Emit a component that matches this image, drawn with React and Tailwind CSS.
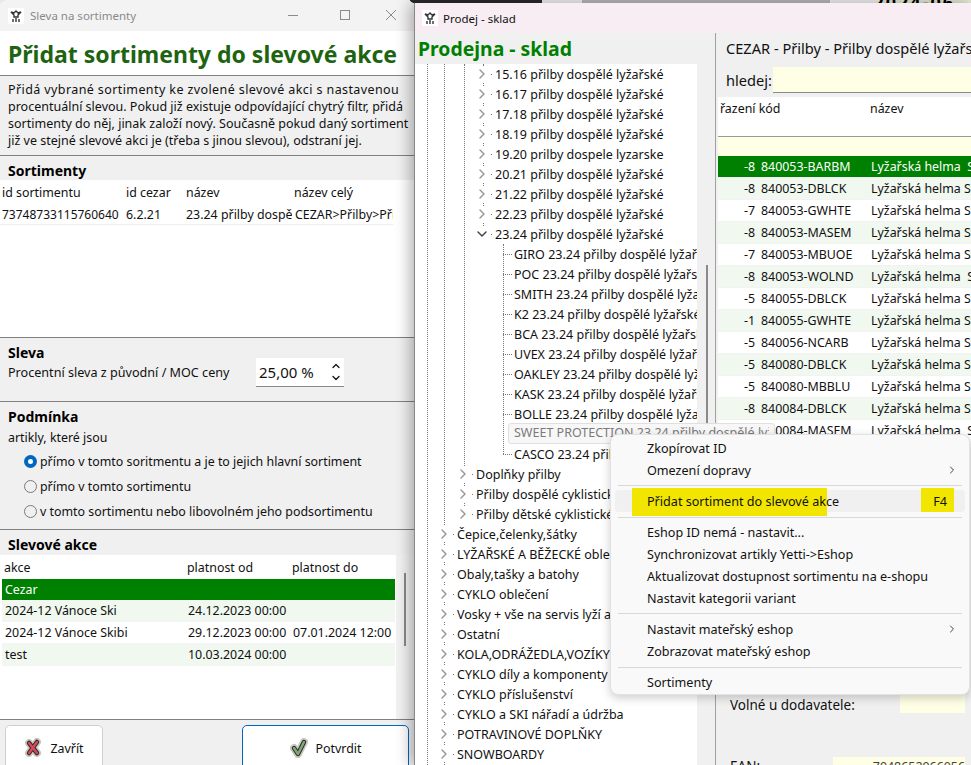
import { ChevronDown, ChevronRight, ChevronUp } from "lucide-react";

const treeTop = [
	"15.16 přilby dospělé lyžařské",
	"16.17 přilby dospělé lyžařské",
	"17.18 přilby dospělé lyžařské",
	"18.19 přilby dospělé lyžařské",
	"19.20 prilby dospele lyzarske",
	"20.21 přilby dospělé lyžařské",
	"21.22 přilby dospělé lyžařské",
	"22.23 přilby dospělé lyžařské",
];

const brands = [
	"GIRO 23.24 přilby dospělé lyžařské",
	"POC 23.24 přilby dospělé lyžařské",
	"SMITH 23.24 přilby dospělé lyžařské",
	"K2 23.24 přilby dospělé lyžařské",
	"BCA 23.24 přilby dospělé lyžařské",
	"UVEX 23.24 přilby dospělé lyžařské",
	"OAKLEY 23.24 přilby dospělé lyžařské",
	"KASK 23.24 přilby dospělé lyžařské",
	"BOLLE 23.24 přilby dospělé lyžařské",
];

const roots = [
	"Čepice,čelenky,šátky",
	"LYŽAŘSKÉ A BĚŽECKÉ oblečení",
	"Obaly,tašky a batohy",
	"CYKLO oblečení",
	"Vosky + vše na servis lyží a snowboardů",
	"Ostatní",
	"KOLA,ODRÁŽEDLA,VOZÍKY",
	"CYKLO díly a komponenty",
	"CYKLO příslušenství",
	"CYKLO a SKI nářadí a údržba",
	"POTRAVINOVÉ DOPLŇKY",
	"SNOWBOARDY",
];

const products = [
	["-8", "840053-BARBM", "Lyžařská helma  Sweet"],
	["-8", "840053-DBLCK", "Lyžařská helma Sweet"],
	["-7", "840053-GWHTE", "Lyžařská helma Sweet"],
	["-8", "840053-MASEM", "Lyžařská helma Sweet"],
	["-7", "840053-MBUOE", "Lyžařská helma Sweet"],
	["-8", "840053-WOLND", "Lyžařská helma  Sweet"],
	["-5", "840055-DBLCK", "Lyžařská helma Sweet"],
	["-1", "840055-GWHTE", "Lyžařská helma Sweet"],
	["-5", "840056-NCARB", "Lyžařská helma Sweet"],
	["-5", "840080-DBLCK", "Lyžařská helma Sweet"],
	["-5", "840080-MBBLU", "Lyžařská helma Sweet"],
	["-8", "840084-DBLCK", "Lyžařská helma Sweet"],
	["-8", "840084-MASEM", "Lyžařská helma  Sweet"],
];

const promos = [
	["2024-12 Vánoce Ski", "24.12.2023 00:00", "", "bg-[#f0f8f0]"],
	["2024-12 Vánoce Skibi", "29.12.2023 00:00", "07.01.2024 12:00", "bg-white"],
	["test", "10.03.2024 00:00", "", "bg-[#f0f8f0]"],
];

const AppIcon = () => (
	<span className="flex h-4 w-4 shrink-0 items-center justify-center bg-white">
		<svg viewBox="0 0 16 16" className="h-4 w-4">
			<path d="M3 4l3 1 2-2 2 2 3-1-3 3v2H6V7zM5 11v3M8 10v4M11 11v3" fill="none" stroke="#333" strokeWidth="1.4" />
		</svg>
	</span>
);

const WindowControls = () => (
	<svg viewBox="0 0 108 10" className="mb-[2px] mr-[18px] h-[10px] w-[108px]" fill="none" stroke="#8a8a8a" strokeWidth="1">
		<path d="M0 5.5h10" />
		<rect x="52.5" y="0.5" width="9" height="9" />
		<path d="M98 0l10 10M108 0L98 10" />
	</svg>
);

const ButtonMark = ({ path, color }) => (
	<svg viewBox="0 0 18 20" className="h-5 w-[18px]" fill="none" strokeLinecap="round" strokeLinejoin="round">
		<path d={path} stroke="#cbc8c0" strokeWidth="8" />
		<path d={path} stroke="#2b2b2b" strokeWidth="4.5" />
		<path d={path} stroke={color} strokeWidth="2.5" />
	</svg>
);

const SectionTitle = ({ children }) => (
	<div className="text-[14px] font-bold leading-[19px] text-black">{children}</div>
);

const Radio = ({ checked, label }) => (
	<div className="flex h-[25px] items-center gap-[3px] pl-6">
		{checked ? (
			<span className="flex h-[13px] w-[13px] items-center justify-center rounded-full bg-[#0067c0]">
				<span className="h-[5px] w-[5px] rounded-full bg-white" />
			</span>
		) : (
			<span className="h-[13px] w-[13px] rounded-full border border-[#7a7a7a]" />
		)}
		<span>{label}</span>
	</div>
);

const TreeRow = ({ indent, open, children }) => (
	<div className={`relative flex h-5 items-center whitespace-nowrap ${indent}`}>
		{open ? (
			<ChevronDown className="h-4 w-4 shrink-0 bg-white text-[#444]" strokeWidth={2.2} />
		) : (
			<ChevronRight className="h-4 w-4 shrink-0 bg-white text-[#999]" strokeWidth={2.2} />
		)}
		<span className="ml-px mr-[3px] h-px w-px shrink-0 bg-[#777]" />
		<span>{children}</span>
	</div>
);

const BrandRow = ({ children }) => (
	<div className="flex h-5 items-center whitespace-nowrap">
		<span className="mr-[2px] w-[9px] shrink-0 border-t border-dotted border-[#777]" />
		{children}
	</div>
);

const MenuItem = ({ label, arrow }) => (
	<div className="flex h-[22px] items-center justify-between pl-9 pr-[11px]">
		<span>{label}</span>
		{arrow && <ChevronRight className="h-3 w-3 text-[#444]" />}
	</div>
);

const Separator = ({ spacing = "my-[4px]" }) => (
	<div className={`ml-[7px] mr-[7px] h-px bg-[#d8d8d8] ${spacing}`} />
);

const DiscountWindow = () => (
	<section className="absolute left-0 top-0 flex h-[765px] w-[414px] flex-col overflow-hidden rounded-t-lg bg-[#f0f0f0] text-[12.4px] leading-[17px] text-[#111]">
		<header className="flex h-[31px] shrink-0 items-center bg-[#f3f3f3] pl-2 text-[11.5px] text-[#8a8a8a]">
			<AppIcon />
			<span className="ml-[6px] flex-1">Sleva na sortimenty</span>
			<WindowControls />
		</header>
		<div className="h-[45px] shrink-0 border-b border-[#808080] bg-white pl-2 text-[23px] font-bold leading-[46px] text-[#1e6410]">
			Přidat sortimenty do slevové akce
		</div>
		<p className="h-[80px] shrink-0 whitespace-nowrap border-b border-[#808080] pl-2 pt-[5px] text-[12.5px]">
			<span className="tracking-[0.4px]">Přidá vybrané sortimenty ke zvolené slevové akci s nastavenou</span>
			<br />
			procentuální slevou. Pokud již existuje odpovídající chytrý filtr, přidá
			<br />
			sortimenty do něj, jinak založí nový. Současně pokud daný sortiment
			<br />
			již ve stejné slevové akci je (třeba s jinou slevou), odstraní jej.
		</p>
		<div className="h-[24px] shrink-0 pl-2 pt-[5px]">
			<SectionTitle>Sortimenty</SectionTitle>
		</div>
		<div className="h-[158px] shrink-0 border-b border-[#808080] bg-white">
			<div className="flex h-[24px] items-center">
				<span className="w-[126px] pl-[2px]">id sortimentu</span>
				<span className="w-[60px]">id cezar</span>
				<span className="w-[108px]">název</span>
				<span>název celý</span>
			</div>
			<div className="flex h-[21px] w-[393px] items-center border-b border-[#eeeeee] pt-[1px]">
				<span className="w-[126px] pl-[2px] text-[12px]">73748733115760640</span>
				<span className="w-[60px]">6.2.21</span>
				<span className="mr-[3px] w-[106px] overflow-hidden whitespace-nowrap">23.24 přilby dospělé lyžařské</span>
				<span className="w-[98px] overflow-hidden whitespace-nowrap">CEZAR&gt;Přilby&gt;Přilby dospělé</span>
			</div>
		</div>
		<div className="h-[64px] shrink-0 border-b border-[#808080] pl-2 pt-[5px]">
			<SectionTitle>Sleva</SectionTitle>
			<div className="-mt-[4px] flex items-center">
				<span className="w-[248px] text-[12.6px]">Procentní sleva z původní / MOC ceny</span>
				<div className="flex h-[29px] w-[88px] items-center justify-between border-b border-[#8a8a8a] bg-white pl-[3px] pr-[2px] text-[15px]">
					<span>25,00 %</span>
					<span className="flex flex-col">
						<ChevronUp className="h-3 w-3" strokeWidth={2.5} />
						<ChevronDown className="h-3 w-3" strokeWidth={2.5} />
					</span>
				</div>
			</div>
		</div>
		<div className="h-[128px] shrink-0 border-b border-[#808080] pt-[5px]">
			<div className="pl-2">
				<SectionTitle>Podmínka</SectionTitle>
				<div className="mt-[3px] h-[20px]">artikly, které jsou</div>
			</div>
			<Radio checked label="přímo v tomto soritmentu a je to jejich hlavní sortiment" />
			<Radio label="přímo v tomto sortimentu" />
			<Radio label="v tomto sortimentu nebo libovolném jeho podsortimentu" />
		</div>
		<div className="h-[25px] shrink-0 pl-2 pt-[5px]">
			<SectionTitle>Slevové akce</SectionTitle>
		</div>
		<div className="relative h-[165px] shrink-0 border-b border-[#808080] bg-white pl-[2px]">
			<div className="flex h-[24px] items-center pl-[2px]">
				<span className="w-[183px]">akce</span>
				<span className="w-[105px]">platnost od</span>
				<span>platnost do</span>
			</div>
			<div className="flex h-[21px] w-[393px] items-center bg-[#008000] pl-[3px] text-white">Cezar</div>
			{promos.map(([name, from, to, rowColor]) => (
				<div key={name} className={`flex h-[22px] w-[393px] items-center border-b border-[#f4f4f4] pl-[3px] ${rowColor}`}>
					<span className="w-[183px]">{name}</span>
					<span className="w-[105px]">{from}</span>
					<span>{to}</span>
				</div>
			))}
			<div className="absolute right-0 top-0 h-full w-[18px] bg-[#f2f2f2]">
				<div className="absolute left-[8px] top-[18px] h-[73px] w-[2px] bg-[#8a8a8a]" />
			</div>
		</div>
		<div className="flex flex-1 justify-between px-[5px] pt-[5px]">
			<button type="button" className="flex h-[46px] w-[98px] items-center justify-center gap-2 rounded-[5px] border border-[#d0d0d0] bg-white">
				<ButtonMark path="M5 5l8 10M13 4L5 15" color="#d8485a" />
				Zavřít
			</button>
			<button type="button" className="flex h-[46px] w-[167px] items-center justify-center gap-2 rounded-[5px] border border-[#0067c0] bg-white">
				<ButtonMark path="M4 10l4 6 6-12" color="#7fa878" />
				Potvrdit
			</button>
		</div>
	</section>
);

const Tree = () => (
	<div className="relative h-[701px] w-[282px] overflow-hidden bg-white text-[12.5px]">
		<div className="absolute bottom-0 left-[12px] top-0 border-l border-dotted border-[#777]" />
		<div className="absolute bottom-0 left-[29px] top-0 border-l border-dotted border-[#777]" />
		<div className="absolute left-[49px] top-0 h-[450px] border-l border-dotted border-[#777]" />
		<div className="absolute left-[68px] top-0 h-[170px] border-l border-dotted border-[#777]" />
		{treeTop.map((label) => (
			<TreeRow key={label} indent="pl-[59px]">{label}</TreeRow>
		))}
		<TreeRow indent="pl-[59px]" open>23.24 přilby dospělé lyžařské</TreeRow>
		<div className="relative ml-[88px]">
			<div className="absolute left-0 top-0 h-[210px] border-l border-dotted border-[#777]" />
			{brands.map((label) => (
				<BrandRow key={label}>{label}</BrandRow>
			))}
			<div className="h-5" />
			<BrandRow>CASCO 23.24 přilby dospělé lyžařské</BrandRow>
		</div>
		<TreeRow indent="pl-[40px]">Doplňky přilby</TreeRow>
		<TreeRow indent="pl-[40px]">Přilby dospělé cyklistické</TreeRow>
		<TreeRow indent="pl-[40px]">Přilby dětské cyklistické</TreeRow>
		{roots.map((label) => (
			<TreeRow key={label} indent="pl-[21px]">{label}</TreeRow>
		))}
	</div>
);

const ProductsPane = () => (
	<div className="min-w-0 flex-1 overflow-hidden border-l border-[#a0a0a0] pl-[2px]">
		<div className="flex h-[33px] items-center whitespace-nowrap pb-[2px] pl-2 text-[14.6px]">
			CEZAR - Přilby - Přilby dospělé lyžařské - 23.24
		</div>
		<div className="flex h-[31px] items-start pt-[1px]">
			<span className="w-[55px] pl-2 text-[14.6px] leading-[26px]">hledej:</span>
			<div className="h-[26px] flex-1 border-b border-[#8a8a8a] bg-[#ffffe6]" />
		</div>
		<div className="flex h-[40px] border-b border-[#9a9a9a] bg-white pl-[2px] pt-[3px]">
			<span className="w-[150px]">řazení kód</span>
			<span>název</span>
		</div>
		<div className="h-[19px] bg-[#ffffe6]" />
		{products.map(([stock, code, name], index) => (
			<div
				key={code}
				className={`flex h-[22px] items-center overflow-hidden whitespace-pre border-b border-[#f2f2f2] ${
					index === 0 ? "bg-[#008000] text-white" : index % 2 === 1 ? "bg-[#f0f8f0]" : "bg-white"
				}`}
			>
				<span className="w-[37px] shrink-0 text-right">{stock}</span>
				<span className="ml-[6px] w-[110px] shrink-0">{code}</span>
				<span>{name}</span>
			</div>
		))}
		<div className="ml-[2px] h-[323px] bg-[#f0f0f0] pl-[10px] pr-[6px] pt-[248px]">
			<div className="flex h-[23px] items-end">
				<span className="w-[170px] text-[13.5px] leading-[16px]">Volné u dodavatele:</span>
				<span className="h-[23px] w-[65px] bg-[#ffffe6]" />
			</div>
			<div className="mt-[44px] flex h-[22px]">
				<span className="w-[103px] pt-[1px] text-[13.5px]">EAN:</span>
				<span className="h-[22px] w-[132px] bg-[#ffffe6] pt-[1px] text-right text-[#444]">7948652966056</span>
			</div>
		</div>
	</div>
);

const ContextMenu = () => (
	<div className="absolute left-[610px] top-[434px] h-[261px] w-[360px] rounded-lg border border-[#e2e2e2] bg-[#f9f9f9] pt-[2px] text-[12.6px] leading-[17px] text-[#111] shadow-[0_3px_10px_rgba(0,0,0,0.2)]">
		<MenuItem label="Zkopírovat ID" />
		<MenuItem label="Omezení dopravy" arrow />
		<Separator />
		<div className="relative mx-[4px] flex h-[22px] items-center justify-between rounded bg-[#f0f0f0] pl-8 pr-[18px]">
			<span className="absolute left-[17px] top-[-2px] h-[28px] w-[195px] bg-[#f2e600]" />
			<span className="absolute right-[11px] top-[-2px] h-[24px] w-[33px] bg-[#f2e600]" />
			<span className="relative">Přidat sortiment do slevové akce</span>
			<span className="relative">F4</span>
		</div>
		<Separator spacing="mt-[5px] mb-[3px]" />
		<MenuItem label="Eshop ID nemá - nastavit..." />
		<MenuItem label="Synchronizovat artikly Yetti->Eshop" />
		<MenuItem label="Aktualizovat dostupnost sortimentu na e-shopu" />
		<MenuItem label="Nastavit kategorii variant" />
		<Separator />
		<MenuItem label="Nastavit mateřský eshop" arrow />
		<MenuItem label="Zobrazovat mateřský eshop" />
		<Separator spacing="mt-[5px] mb-[3px]" />
		<MenuItem label="Sortimenty" />
	</div>
);

// hovered tree item spills over the product table, so it sits above both panes
const HoveredTreeItem = () => (
	<div className="absolute left-[508px] top-[423px] flex h-[21px] w-[267px] items-center rounded-[3px] border border-[#e0e0e0] bg-[#f7f7f7] pl-[5px] pr-[5px] text-[12.5px] text-[#7a7a7a]">
		<span className="overflow-hidden whitespace-nowrap">SWEET PROTECTION 23.24 přilby dospělé lyžařské</span>
	</div>
);

const StockWindow = () => (
	<section className="absolute left-[414px] top-[3px] flex h-[762px] w-[557px] flex-col overflow-hidden border-l border-[#888] bg-[#f0f0f0] text-[12.4px] leading-[17px] text-[#111] shadow-[-4px_0_14px_rgba(0,0,0,0.3)]">
		<header className="flex h-[30px] shrink-0 items-center bg-[#f8edf3] pl-[7px] text-[11.5px]">
			<AppIcon />
			<span className="ml-[5px]">Prodej - sklad</span>
		</header>
		<div className="flex flex-1">
			<div className="relative w-[300px] shrink-0">
				<div className="flex h-[31px] items-center pl-[3px] text-[19.4px] font-bold text-[#008000]">Prodejna - sklad</div>
				<Tree />
				<div className="absolute left-[291px] top-[232px] h-[190px] w-[2px] bg-[#8a8a8a]" />
			</div>
			<ProductsPane />
		</div>
	</section>
);

const DesktopStrip = () => (
	<div className="relative flex h-[3px] items-stretch overflow-hidden">
		<div className="w-[410px] bg-[#e8e8e8]" />
		<div className="w-[132px] bg-[#2a2a2a]" />
		<div className="w-[40px] bg-[#f0f0f0]" />
		<div className="w-[248px] bg-[#b8b8b8]" />
		<div className="w-[52px] bg-[#f0f0f0]" />
		<div className="flex-1 bg-[#dfe8d0]" />
	</div>
);

export default function App() {
	return (
		<main className="relative h-[765px] w-[971px] overflow-hidden bg-[#f0f0f0] font-['Noto_Sans',sans-serif]">
			<DesktopStrip />
			<div className="absolute right-[16px] top-[-11px] text-[18px] font-bold tracking-[2px] text-black">2024-06</div>
			<DiscountWindow />
			<StockWindow />
			<HoveredTreeItem />
			<ContextMenu />
		</main>
	);
}
